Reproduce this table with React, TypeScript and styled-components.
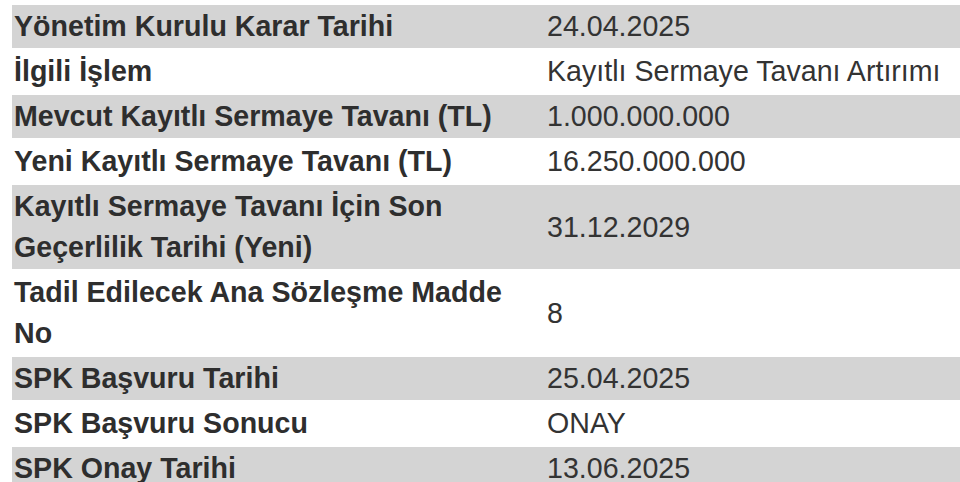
import styled, { createGlobalStyle } from 'styled-components';

const GlobalStyle = createGlobalStyle`
  html, body {
    margin: 0;
    padding: 0;
    background: #ffffff;
    overflow: hidden;
  }
`;

const Wrapper = styled.div`
  padding: 3px 0 0 12px;
  width: 960px;
  height: 482px;
  box-sizing: border-box;
  overflow: hidden;
`;

const Table = styled.table`
  width: 960px;
  border-collapse: separate;
  border-spacing: 0 2px;
  font-family: 'Liberation Sans', Arial, sans-serif;
  font-size: 28.6px;
  line-height: 41px;
  color: #333333;
`;

const Row = styled.tr<{ $shaded: boolean }>`
  background-color: ${(p) => (p.$shaded ? '#d4d4d4' : 'transparent')};
`;

const Label = styled.td`
  width: 511px;
  padding: 1px 20px 1px 2px;
  font-weight: bold;
  color: #2e2e2e;
  vertical-align: middle;
`;

const Value = styled.td`
  padding: 1px 2px;
  vertical-align: middle;
  white-space: nowrap;
`;

const rows: [string, string][] = [
  ['Yönetim Kurulu Karar Tarihi', '24.04.2025'],
  ['İlgili İşlem', 'Kayıtlı Sermaye Tavanı Artırımı'],
  ['Mevcut Kayıtlı Sermaye Tavanı (TL)', '1.000.000.000'],
  ['Yeni Kayıtlı Sermaye Tavanı (TL)', '16.250.000.000'],
  ['Kayıtlı Sermaye Tavanı İçin Son Geçerlilik Tarihi (Yeni)', '31.12.2029'],
  ['Tadil Edilecek Ana Sözleşme Madde No', '8'],
  ['SPK Başvuru Tarihi', '25.04.2025'],
  ['SPK Başvuru Sonucu', 'ONAY'],
  ['SPK Onay Tarihi', '13.06.2025'],
];

function App() {
  return (
    <>
      <GlobalStyle />
      <Wrapper>
        <Table>
          <tbody>
            {rows.map(([label, value], i) => (
              <Row key={label} $shaded={i % 2 === 0}>
                <Label>{label}</Label>
                <Value>{value}</Value>
              </Row>
            ))}
          </tbody>
        </Table>
      </Wrapper>
    </>
  );
}

export default App;
